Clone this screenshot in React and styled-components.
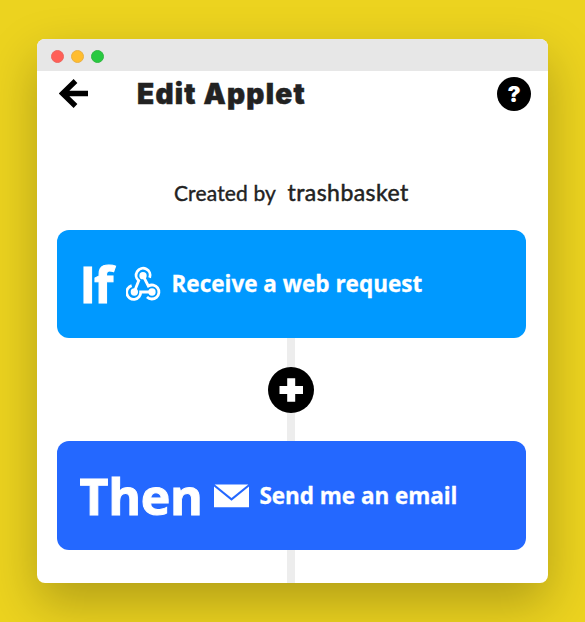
import React from "react";
import styled, { createGlobalStyle } from "styled-components";

const GlobalStyle = createGlobalStyle`
  * { box-sizing: border-box; }
  body { margin: 0; background: #ecd31f; font-family: Lato, sans-serif; }
`;

const Desktop = styled.main`
  height: 622px;
  padding: 39px 37px;
  overflow: hidden;
  background: #ecd31f;
`;

const Window = styled.section`
  width: 511px;
  height: 544px;
  border-radius: 8px;
  background: #fff;
  box-shadow: 0 20px 50px rgba(0, 0, 0, 0.25);
`;

const TitleBar = styled.div`
  display: flex;
  align-items: center;
  gap: 7px;
  height: 32px;
  padding: 2px 13.5px 0;
  border-radius: 8px 8px 0 0;
  background: #e7e7e7;
`;

const Light = styled.i`
  width: 13px;
  height: 13px;
  border-radius: 50%;
  background: ${(p) => p.$color};
  border: 1px solid ${(p) => p.$edge};
`;

const Header = styled.header`
  display: flex;
  align-items: center;
  height: 45px;
  padding: 0 17px 0 22px;
`;

const BackIcon = styled.svg`
  width: 30px;
  height: 30px;
  flex: none;
`;

const Title = styled.h1`
  flex: 1;
  margin: 0 0 0 48px;
  color: #222;
  font: 900 28px/40px Inter, sans-serif;
  letter-spacing: ${(p) => p.$track}px;
  white-space: nowrap;
  -webkit-text-stroke: 0.5px #222;
`;

const Help = styled.button`
  width: 34px;
  height: 34px;
  padding: 0;
  border: 0;
  border-radius: 50%;
  background: #000;
  color: #fff;
  font: 900 22px/34px Inter, sans-serif;
`;

const Byline = styled.p`
  display: flex;
  align-items: baseline;
  height: 30px;
  margin: 61px 0 22.5px 137px;
  color: #222;
  line-height: 30px;
  white-space: nowrap;
`;

const Label = styled.span`
  width: 113.5px;
  font-size: 21px;
  letter-spacing: ${(p) => p.$track}px;
  -webkit-text-stroke: 0.4px #222;
`;

const Author = styled.span`
  font-size: 23px;
  letter-spacing: ${(p) => p.$track}px;
  -webkit-text-stroke: 0.5px #222;
`;

const Card = styled.article`
  display: flex;
  align-items: center;
  width: 469px;
  height: 108.5px;
  margin-left: 19.5px;
  padding: 1px 0 0 23px;
  border-radius: 12px;
  background: ${(p) => p.$color};
  color: #fff;
  white-space: nowrap;
`;

const Keyword = styled.strong`
  width: ${(p) => p.$width}px;
  font: 700 50px/60px "Open Sans", sans-serif;
  letter-spacing: ${(p) => p.$track}px;
  -webkit-text-stroke: 1px #fff;
`;

const ServiceIcon = styled.svg`
  flex: none;
  width: 36px;
  height: 36px;
`;

const Action = styled.span`
  margin-left: 10px;
  font: 700 22.5px/30px "Open Sans", sans-serif;
  letter-spacing: ${(p) => p.$track}px;
  -webkit-text-stroke: 0.3px #fff;
`;

const Connector = styled.div`
  display: flex;
  align-items: center;
  justify-content: center;
  width: 46px;
  height: ${(p) => p.$height}px;
  margin-left: 231px;
  background: linear-gradient(#ededed, #ededed) 19px 0 / 8px 100% no-repeat;
`;

const AddButton = styled.button`
  width: 46px;
  height: 46px;
  padding: 0;
  border: 0;
  border-radius: 50%;
  background: #000;
`;

const AddIcon = styled.svg`
  display: block;
  width: 46px;
  height: 46px;
`;

function Webhook() {
  return (
    <ServiceIcon viewBox="3 0 108 108" fill="none" stroke="#fff" strokeWidth="8.5">
      <path d="M74 35A21 21 0 1 0 41 44L28 77" />
      <path d="M54 29L70 60A21 21 0 1 1 66 93" />
      <path d="M20 59A21 21 0 1 0 47 78H81" />
      <g fill="#fff" stroke="none">
        <circle cx="54" cy="29" r="11" />
        <circle cx="28" cy="78" r="11" />
        <circle cx="81" cy="78" r="11" />
      </g>
    </ServiceIcon>
  );
}

function Envelope() {
  return (
    <ServiceIcon viewBox="0 0 36 36" fill="#fff">
      <path d="M.7 6.5H34.3L17.5 20Z" />
      <path d="M0 8.5L17.5 22.7L35 8.5V29.3H0Z" />
    </ServiceIcon>
  );
}

export default function App() {
  return (
    <Desktop>
      <GlobalStyle />
      <Window>
        <TitleBar>
          <Light $color="#ff5f57" $edge="#ed665f" />
          <Light $color="#ffbd2e" $edge="#e9b044" />
          <Light $color="#28c940" $edge="#32b843" />
        </TitleBar>
        <Header>
          <BackIcon viewBox="0 0 30 30" fill="none" stroke="#000" strokeWidth="5.4">
            <path d="M16.5 2L3.6 14.5L16.5 27M4 14.5H29" />
          </BackIcon>
          <Title $track={1.25}>Edit Applet</Title>
          <Help aria-label="Help">?</Help>
        </Header>
        <Byline>
          <Label $track={0.15}>Created by</Label>
          <Author $track={0.45}>trashbasket</Author>
        </Byline>
        <Card $color="#0099ff">
          <Keyword $width={46} $track={-2}>If</Keyword>
          <Webhook />
          <Action $track={0}>Receive a web request</Action>
        </Card>
        <Connector $height={103}>
          <AddButton aria-label="Add step">
            <AddIcon viewBox="0 0 46 46" stroke="#fff" strokeWidth="8">
              <path d="M11.5 23H35M23.2 11.3V34.7" />
            </AddIcon>
          </AddButton>
        </Connector>
        <Card $color="#2468ff">
          <Keyword $width={134} $track={-0.3}>Then</Keyword>
          <Envelope />
          <Action $track={-0.05}>Send me an email</Action>
        </Card>
        <Connector $height={33} />
      </Window>
    </Desktop>
  );
}
